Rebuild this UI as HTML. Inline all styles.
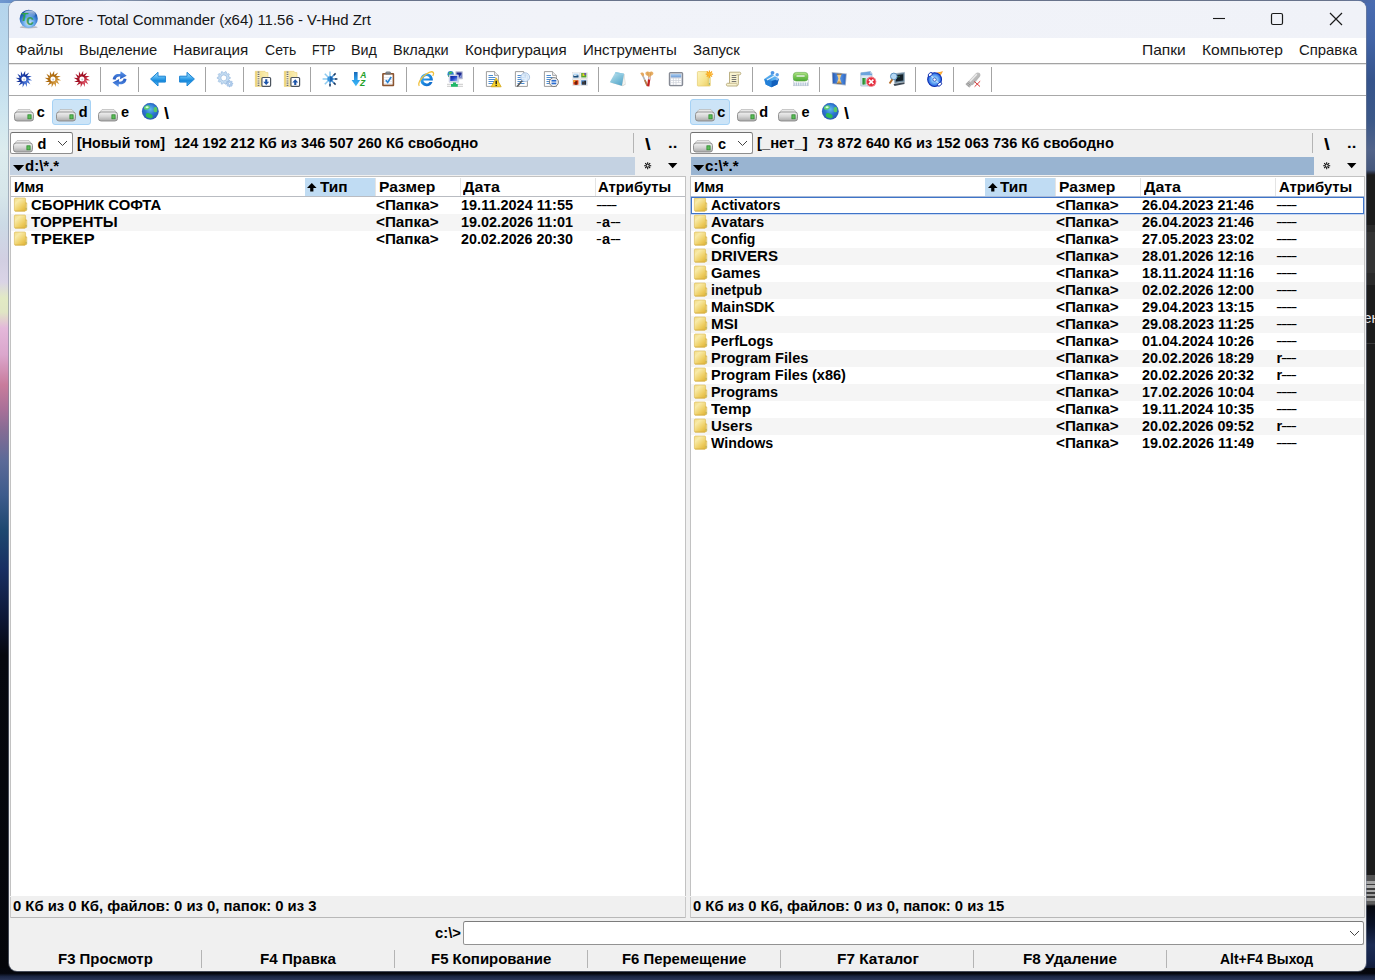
<!DOCTYPE html>
<html lang="ru"><head><meta charset="utf-8"><title>DTore - Total Commander</title>
<style>
html,body{margin:0;padding:0;background:#0c1428;overflow:hidden}
#root{position:relative;width:1375px;height:980px;overflow:hidden;font-family:'Liberation Sans', sans-serif}
#root>div,#root>svg,#root>span{position:absolute}
#root>svg{overflow:visible}
.t{white-space:pre;transform-origin:0 0;color:#000}
.b{font-weight:700}.r{font-weight:400}
</style></head><body><div id="root">
<svg width="0" height="0" style="position:absolute"><defs>
<linearGradient id="drv" x1="0" y1="0" x2="0" y2="1"><stop offset="0" stop-color="#f2f2f2"/><stop offset=".5" stop-color="#d4d4d4"/><stop offset="1" stop-color="#a8a8a8"/></linearGradient>
<radialGradient id="glb" cx=".5" cy=".38" r=".62"><stop offset="0" stop-color="#60bcec"/><stop offset=".55" stop-color="#2c74d0"/><stop offset="1" stop-color="#2a58b4"/></radialGradient>
<linearGradient id="fld" x1="0" y1="0" x2=".8" y2="1"><stop offset="0" stop-color="#f3dc84"/><stop offset=".3" stop-color="#f8eaa8"/><stop offset=".7" stop-color="#efd066"/><stop offset="1" stop-color="#e4b93e"/></linearGradient>
</defs></svg>
<div style="left:0px;top:0px;width:12px;height:980px;background:linear-gradient(180deg,#b4d4ec 0,#bcdaee 60px,#cde5f0 110px,#dcecee 150px,#d6e6ea 195px,#ccdae6 225px,#d2cfe2 260px,#dad4e6 282px,#e2eac4 298px,#e0e6c4 312px,#e4b8da 328px,#dba6cc 355px,#c87c9c 385px,#a87098 410px,#866c94 430px,#5c6a98 460px,#3e5c8c 495px,#1e4870 530px,#182e62 570px,#0d1634 620px,#06080f 655px,#04050a 980px)"></div>
<div style="left:1360px;top:0px;width:15px;height:980px;background:linear-gradient(180deg,#4a6cb2 0,#4264a6 40px,#36548c 80px,#3c5888 120px,#52648a 150px,#46587c 170px,#2a3040 173px,#1c1c1c 175px,#1c1c1c 225px,#2a2a2a 225px,#2a2a2a 232px,#333 232px,#333 273px,#2a2a2a 273px,#2a2a2a 285px,#1c1c1c 285px,#1c1c1c 343px,#3a3a3a 343px,#3a3a3a 344px,#1c1c1c 344px,#1c1c1c 875px,#525252 875px,#525252 881px,#a4a4a4 881px,#a4a4a4 884px,#3c3c3c 884px,#3c3c3c 885px,#b0b0b0 885px,#b0b0b0 888px,#3c3c3c 888px,#3c3c3c 889.500px,#a8a8a8 889.500px,#a8a8a8 892px,#3c3c3c 892px,#3c3c3c 893.500px,#a0a0a0 893.500px,#a0a0a0 896px,#3c3c3c 896px,#3c3c3c 897.500px,#9c9c9c 897.500px,#9c9c9c 901px,#5c5c5c 901px,#5c5c5c 904px,#05070e 906px,#0a1228 925px,#1c2c54 945px,#16244a 960px,#0a1020 980px)"></div>
<span class="t r" style="left:1363.500px;top:309.600px;font-size:14.500px;line-height:17px;color:#e4e4e4">ен</span>
<div style="left:0px;top:0px;width:1375px;height:3px;background:linear-gradient(90deg,#7098d0 0,#4a74b4 4%,#9ab4d8 8%,#56627e 13%,#56627e 97%,#4a6cb2 100%)"></div>
<div style="left:0px;top:968px;width:1375px;height:12px;background:linear-gradient(180deg,#04060c 0,#05070e 45%,#1a2542 70%,#2a3658 100%)"></div>
<div style="left:9px;top:0.8px;width:1357px;height:969.8000000000001px;background:#f0f0f0;border-radius:8px;box-shadow:0 0 0 1px rgba(120,130,150,.55)"></div>
<div style="left:9px;top:0.8px;width:1357px;height:37px;background:linear-gradient(90deg,#eef1f9,#f1f3f9 40%,#f0f2f8);border-radius:8px 8px 0 0"></div>
<div style="left:9px;top:38px;width:1357px;height:91.5px;background:#fff"></div>
<div style="left:9px;top:63px;width:1357px;height:1.3px;background:#a3a3a3"></div>
<div style="left:9px;top:64.3px;width:1357px;height:1px;background:#e6e6e6"></div>
<div style="left:9px;top:95px;width:1357px;height:1.2px;background:#a8a8a8"></div>
<div style="left:9px;top:129px;width:1357px;height:1.2px;background:#cfcfcf"></div>
<svg style="left:18.5px;top:8.6px" width="19.5" height="19.5" viewBox="0 0 19.5 19.5"><defs><radialGradient id="tcg" cx=".5" cy=".72" r=".62"><stop offset="0" stop-color="#dcecfc"/><stop offset=".4" stop-color="#7cb8f0"/><stop offset=".8" stop-color="#2c70c8"/><stop offset="1" stop-color="#1a54a8"/></radialGradient>
<linearGradient id="tch" x1="0" y1="0" x2="0" y2="1"><stop offset="0" stop-color="#fff" stop-opacity=".7"/><stop offset="1" stop-color="#fff" stop-opacity="0"/></linearGradient></defs>
<ellipse cx="9.700" cy="18.200" rx="9" ry="1.200" fill="#8c8c98" opacity=".55"/><circle cx="9.700" cy="9.800" r="9.100" fill="url(#tcg)"/><ellipse cx="10.500" cy="5" rx="6" ry="3.500" fill="url(#tch)"/>
<text x="1.800" y="12.200" font-family="Liberation Sans,sans-serif" font-size="11.500" font-weight="700" font-style="italic" fill="#2ca44c">T</text>
<text x="7.300" y="15.800" font-family="Liberation Sans,sans-serif" font-size="14" font-weight="700" fill="#3a9c5c">c</text></svg>
<svg style="left:1212px;top:12px" width="14" height="14" viewBox="0 0 14 14"><path d="M1 6.500h12" stroke="#1a1a1a" stroke-width="1.100"/></svg>
<svg style="left:1270px;top:12px" width="14" height="14" viewBox="0 0 14 14"><rect x="1.500" y="1.500" width="11" height="11" rx="1.500" fill="none" stroke="#1a1a1a" stroke-width="1.200"/></svg>
<svg style="left:1329px;top:12px" width="14" height="14" viewBox="0 0 14 14"><path d="M1 1l12 12M13 1L1 13" stroke="#1a1a1a" stroke-width="1.200"/></svg>
<svg style="left:16.0px;top:71px" width="16" height="16" viewBox="0 0 16 16"><defs><linearGradient id="sb" x1="0" y1="0" x2="1" y2="1"><stop offset="0" stop-color="#3460c8"/><stop offset=".4" stop-color="#102c94"/><stop offset=".7" stop-color="#3460c8"/><stop offset="1" stop-color="#7cacf8"/></linearGradient></defs><polygon points="6.84,3.93 9.24,-0.19 9.07,3.96 13.21,1.59 10.98,5.10 15.75,5.11 12.07,7.04 16.19,9.44 12.04,9.27 14.41,13.41 10.90,11.18 10.89,15.95 8.96,12.27 6.56,16.39 6.73,12.24 2.59,14.61 4.82,11.10 0.05,11.09 3.73,9.16 -0.39,6.76 3.76,6.93 1.39,2.79 4.90,5.02 4.91,0.25" fill="url(#sb)"/><circle cx="7.9" cy="8.1" r="4.500" fill="url(#sb)"/><circle cx="7.9" cy="8.1" r="2.500" fill="#fff"/><circle cx="8.200" cy="8.400" r="1" fill="#c4c8d0"/></svg>
<svg style="left:45.0px;top:71px" width="16" height="16" viewBox="0 0 16 16"><defs><linearGradient id="so" x1="0" y1="0" x2="1" y2="1"><stop offset="0" stop-color="#c88a2c"/><stop offset=".4" stop-color="#a86408"/><stop offset=".7" stop-color="#c88a2c"/><stop offset="1" stop-color="#f4c470"/></linearGradient></defs><polygon points="6.84,3.93 9.24,-0.19 9.07,3.96 13.21,1.59 10.98,5.10 15.75,5.11 12.07,7.04 16.19,9.44 12.04,9.27 14.41,13.41 10.90,11.18 10.89,15.95 8.96,12.27 6.56,16.39 6.73,12.24 2.59,14.61 4.82,11.10 0.05,11.09 3.73,9.16 -0.39,6.76 3.76,6.93 1.39,2.79 4.90,5.02 4.91,0.25" fill="url(#so)"/><circle cx="7.9" cy="8.1" r="4.500" fill="url(#so)"/><circle cx="7.9" cy="8.1" r="2.500" fill="#fff"/><circle cx="8.200" cy="8.400" r="1" fill="#c4c8d0"/></svg>
<svg style="left:74.0px;top:71px" width="16" height="16" viewBox="0 0 16 16"><defs><linearGradient id="sr" x1="0" y1="0" x2="1" y2="1"><stop offset="0" stop-color="#c83044"/><stop offset=".4" stop-color="#98081c"/><stop offset=".7" stop-color="#c83044"/><stop offset="1" stop-color="#f890a0"/></linearGradient></defs><polygon points="6.84,3.93 9.24,-0.19 9.07,3.96 13.21,1.59 10.98,5.10 15.75,5.11 12.07,7.04 16.19,9.44 12.04,9.27 14.41,13.41 10.90,11.18 10.89,15.95 8.96,12.27 6.56,16.39 6.73,12.24 2.59,14.61 4.82,11.10 0.05,11.09 3.73,9.16 -0.39,6.76 3.76,6.93 1.39,2.79 4.90,5.02 4.91,0.25" fill="url(#sr)"/><circle cx="7.9" cy="8.1" r="4.500" fill="url(#sr)"/><circle cx="7.9" cy="8.1" r="2.500" fill="#fff"/><circle cx="8.200" cy="8.400" r="1" fill="#c4c8d0"/></svg>
<div style="left:99.8px;top:67px;width:1.2px;height:25px;background:#a4a4a4"></div>
<svg style="left:112.0px;top:71px" width="16" height="16" viewBox="0 0 16 16"><defs><linearGradient id="rf" x1="0" y1="0" x2="0" y2="1"><stop offset="0" stop-color="#5c98ec"/><stop offset="1" stop-color="#2458c0"/></linearGradient></defs>
<path d="M.7 8.300C1 4.300 4.400 2.200 8.300 3.100L8.700.2l6 4.500L8 8.200l.3-2.600C6 5.200 4.300 6.100 3.500 8.700z" fill="url(#rf)"/>
<path d="M.7 8.300C1 4.300 4.400 2.200 8.300 3.100L8.700.2l6 4.500L8 8.200l.3-2.600C6 5.200 4.300 6.100 3.500 8.700z" fill="url(#rf)" transform="rotate(180 7.600 8.100)"/></svg>
<div style="left:137.8px;top:67px;width:1.2px;height:25px;background:#a4a4a4"></div>
<svg style="left:150.0px;top:71px" width="16" height="16" viewBox="0 0 16 16"><defs><linearGradient id="ga" x1="0" y1="0" x2="0" y2="1"><stop offset="0" stop-color="#b0e4fc"/><stop offset=".38" stop-color="#4cb0f0"/><stop offset=".62" stop-color="#1488dc"/><stop offset="1" stop-color="#64c0f4"/></linearGradient></defs><path d="M.6 8L8 1.300v3.900h7.400v5.900H8v3.900z" fill="url(#ga)" stroke="#1c84d4" stroke-width="1" stroke-linejoin="round"/></svg>
<svg style="left:179.0px;top:71px" width="16" height="16" viewBox="0 0 16 16"><path d="M15.400 8L8 1.300v3.900H.6v5.900H8v3.900z" fill="url(#ga)" stroke="#1c84d4" stroke-width="1" stroke-linejoin="round"/></svg>
<div style="left:204.8px;top:67px;width:1.2px;height:25px;background:#a4a4a4"></div>
<svg style="left:217.0px;top:71px" width="16" height="16" viewBox="0 0 16 16"><polygon points="13.28,6.39 13.28,7.41 11.66,8.07 11.42,8.81 12.34,10.30 11.74,11.12 10.05,10.70 9.41,11.16 9.29,12.91 8.32,13.22 7.19,11.88 6.41,11.88 5.28,13.22 4.31,12.91 4.19,11.16 3.55,10.70 1.86,11.12 1.26,10.30 2.18,8.81 1.94,8.07 0.32,7.41 0.32,6.39 1.94,5.73 2.18,4.99 1.26,3.50 1.86,2.68 3.55,3.10 4.19,2.64 4.31,0.89 5.28,0.58 6.41,1.92 7.19,1.92 8.32,0.58 9.29,0.89 9.41,2.64 10.05,3.10 11.74,2.68 12.34,3.50 11.42,4.99 11.66,5.73" fill="#c4dcf2" stroke="#9cbce0" stroke-width="0.8" stroke-linejoin="round"/><circle cx="6.8" cy="6.9" r="3" fill="#fff" stroke="#9cbce0" stroke-width="0.8"/><polygon points="15.88,12.38 15.88,13.02 14.90,13.40 14.72,13.83 15.15,14.79 14.69,15.25 13.73,14.82 13.30,15.00 12.92,15.98 12.28,15.98 11.90,15.00 11.47,14.82 10.51,15.25 10.05,14.79 10.48,13.83 10.30,13.40 9.32,13.02 9.32,12.38 10.30,12.00 10.48,11.57 10.05,10.61 10.51,10.15 11.47,10.58 11.90,10.40 12.28,9.42 12.92,9.42 13.30,10.40 13.73,10.58 14.69,10.15 15.15,10.61 14.72,11.57 14.90,12.00" fill="#b4d0ee" stroke="#8cb0dc" stroke-width="0.6" stroke-linejoin="round"/><circle cx="12.6" cy="12.7" r="1.1" fill="#fff" stroke="#8cb0dc" stroke-width="0.6"/></svg>
<div style="left:242.8px;top:67px;width:1.2px;height:25px;background:#a4a4a4"></div>
<svg style="left:255.0px;top:71px" width="16" height="16" viewBox="0 0 16 16"><defs><linearGradient id="zf" x1="0" y1="0" x2="1" y2="0"><stop offset="0" stop-color="#ecd070"/><stop offset=".4" stop-color="#f6e498"/><stop offset="1" stop-color="#fbf0b8"/></linearGradient></defs>
<path d="M.3 .3h9.700l.8 1.300h2.200V15.500H.3z" fill="url(#zf)" stroke="#e4c868" stroke-width=".5"/><rect x="2.300" y=".6" width="2.400" height="14.600" fill="#f8f0d0"/><path d="M3.500 .6v14.600" stroke="#707070" stroke-width="1.800" stroke-dasharray="1.100 1.100"/>
<rect x="6.900" y="6.500" width="8.700" height="8.800" rx="1" fill="#fff" stroke="#4c545e" stroke-width="1.200"/><path d="M10.200 8.200h2.100v2.600h1.900l-2.950 3.200-2.950-3.200h1.900z" fill="#1c54a8"/></svg>
<svg style="left:284.0px;top:71px" width="16" height="16" viewBox="0 0 16 16"><defs><linearGradient id="zf2" x1="0" y1="0" x2="1" y2="0"><stop offset="0" stop-color="#ecd070"/><stop offset=".4" stop-color="#f6e498"/><stop offset="1" stop-color="#fbf0b8"/></linearGradient></defs>
<path d="M.3 .3h9.700l.8 1.300h2.200V15.500H.3z" fill="url(#zf2)" stroke="#e4c868" stroke-width=".5"/><rect x="2.300" y=".6" width="2.400" height="14.600" fill="#f8f0d0"/><path d="M3.500 .6v14.600" stroke="#707070" stroke-width="1.800" stroke-dasharray="1.100 1.100"/>
<rect x="6.900" y="6.500" width="8.700" height="8.800" rx="1" fill="#fff" stroke="#4c545e" stroke-width="1.200"/><path d="M10.200 14h2.100v-2.600h1.900l-2.950-3.200-2.950 3.200h1.900z" fill="#1c54a8"/></svg>
<div style="left:309.8px;top:67px;width:1.2px;height:25px;background:#a4a4a4"></div>
<svg style="left:322.0px;top:71px" width="16" height="16" viewBox="0 0 16 16"><g stroke-width="1.500" stroke-linecap="butt"><path d="M8 .6V8M.6 8H8M2.800 2.800L8 8M2.800 13.200L8 8" stroke="#8ccaf0"/><path d="M8 8v5.600M8 8h5.600M8 8l4.200 4.200M8 8l4.200-4.200" stroke="#4a90d0"/></g>
<path d="M8 13v2.400M13 8h2.400M11.800 11.800l1.800 1.800M11.800 4.200l1.800-1.800" stroke="#16365e" stroke-width="1.500"/><circle cx="8" cy="8" r="2.700" fill="#3a94dc"/><path d="M8 5.300a2.700 2.700 0 0 1 0 5.400z" fill="#1c64b0"/></svg>
<svg style="left:351.0px;top:71px" width="16" height="16" viewBox="0 0 16 16"><defs><linearGradient id="sd" x1="0" y1="0" x2="0" y2="1"><stop offset="0" stop-color="#1668b8"/><stop offset=".5" stop-color="#2a9ce8"/><stop offset="1" stop-color="#40b8f4"/></linearGradient></defs>
<path d="M3 1h3.600v8h2.600L4.900 15.300.6 9h2.400z" fill="url(#sd)"/><text x="9.300" y="7.300" font-family="Liberation Sans,sans-serif" font-size="8.500" font-weight="700" font-style="italic" fill="#1fa028">A</text><text x="9" y="15" font-family="Liberation Sans,sans-serif" font-size="8.500" font-weight="700" font-style="italic" fill="#1fa028">Z</text></svg>
<svg style="left:380.0px;top:71px" width="16" height="16" viewBox="0 0 16 16"><rect x="2.100" y="2" width="12.100" height="13.200" rx="1" fill="#8a5430"/><rect x="3.700" y="3.600" width="8.900" height="10" fill="#fff"/><path d="M4 6.500h8.300M4 8.500h8.300M4 10.500h8.300M4 12.500h8.300" stroke="#dcdce4" stroke-width=".6"/><rect x="5.500" y=".8" width="5.300" height="2.700" rx=".7" fill="#707478"/><rect x="6.500" y=".5" width="3.300" height="1" fill="#9a9ea4"/><path d="M5.800 9.200l1.900 2.200 3.500-5.400" stroke="#2a84d4" stroke-width="1.700" fill="none"/></svg>
<div style="left:405.8px;top:67px;width:1.2px;height:25px;background:#a4a4a4"></div>
<svg style="left:418.0px;top:71px" width="16" height="16" viewBox="0 0 16 16"><defs><linearGradient id="ieg" x1="0" y1="0" x2="1" y2="1"><stop offset="0" stop-color="#58bcf4"/><stop offset=".5" stop-color="#1a88e0"/><stop offset="1" stop-color="#0c5cc0"/></linearGradient></defs>
<path d="M14.800 9.600H5.400c.2 1.700 1.500 2.800 3.200 2.800 1.200 0 2.200-.5 2.800-1.500h3.100c-.9 2.600-3.200 4.300-5.900 4.300-3.600 0-6.300-2.700-6.300-6.400 0-3.600 2.700-6.300 6.300-6.300 3.700 0 6.300 2.800 6.300 6.500zM5.500 7.500h6.300c-.3-1.600-1.500-2.600-3.100-2.600-1.700 0-2.900 1-3.200 2.600z" fill="url(#ieg)"/>
<path d="M1.300 14.800C-.5 12.500 3 6.500 8 3.200 11.200 1 14.300.3 15.300 1.500c.6.700.3 2-.5 3.500" fill="none" stroke="#f0c03c" stroke-width="1.300"/></svg>
<svg style="left:447.0px;top:71px" width="16" height="16" viewBox="0 0 16 16"><defs><linearGradient id="nw" x1="0" y1="0" x2="1" y2="1"><stop offset="0" stop-color="#0c1c9c"/><stop offset=".5" stop-color="#2448c8"/><stop offset="1" stop-color="#9cb8f4"/></linearGradient></defs>
<rect x="8.400" y=".3" width="7.400" height="7.900" rx=".6" fill="#b4b8d0"/><rect x="9.600" y="1.500" width="5" height="5" fill="#1c2890"/><path d="M12 6.500h2.600V3z" fill="#8ca0e0"/>
<circle cx="3.600" cy="3.200" r="3.100" fill="#2a84c8"/><path d="M1.500 2c1-1.200 2.800-1.500 4-.8-.8.800-1.500 1-2.200 1.800-.5.600-1.200.200-1.800-1z" fill="#48c050"/><path d="M1 4.500c.8.200 1.500 1 1.500 1.800" stroke="#48c050" stroke-width="1"/>
<rect x="2" y="3.800" width="9.700" height="7.600" rx=".6" fill="#d4d8ec" stroke="#b8bcd4" stroke-width=".4"/><rect x="3.300" y="5" width="7" height="5" fill="url(#nw)"/>
<path d="M0 13.300h16M0 15.300h16" stroke="#c4c4c4" stroke-width=".9"/><path d="M6 11.400h3v1.600h1.800v2.800H4V13h2z" fill="#20b868"/></svg>
<div style="left:472.8px;top:67px;width:1.2px;height:25px;background:#a4a4a4"></div>
<svg style="left:485.0px;top:71px" width="16" height="16" viewBox="0 0 16 16"><path d="M1.400 .6h8.200l3.800 3.800v11H1.400z" fill="#fff" stroke="#929292" stroke-width=".9"/><path d="M9.600 .6v3.800h3.800" fill="#f0f0f0" stroke="#929292" stroke-width=".8"/><g stroke="#4c8cd0" stroke-width="1"><path d="M3.500 4.500h4.500M3.500 6.500h7M3.500 8.500h7M3.500 10.500h7M3.500 12.500h7"/></g><path d="M11.200 6.800l5 9H6.200z" fill="#f8d42c" stroke="#d0a010" stroke-width=".7" stroke-linejoin="round"/><path d="M11.200 9.700v3.200M11.200 13.700v1.200" stroke="#1a1a1a" stroke-width="1.400"/></svg>
<svg style="left:514.0px;top:71px" width="16" height="16" viewBox="0 0 16 16"><path d="M1.400 .6h8.200l3.800 3.800v11H1.400z" fill="#fff" stroke="#929292" stroke-width=".9"/><path d="M9.600 .6v3.800h3.800" fill="#f0f0f0" stroke="#929292" stroke-width=".8"/><g stroke="#4c8cd0" stroke-width="1"><path d="M3.500 4.500h4.500M3.500 6.500h7M3.500 8.500h7M3.500 10.500h7M3.500 12.500h7"/></g><path d="M8.300 9.500L3.200 15.600" stroke="#5a5a5a" stroke-width="1.500"/><circle cx="11.200" cy="6.200" r="4.400" fill="#dcecfc" fill-opacity=".88" stroke="#a4bcdc" stroke-width=".9"/><path d="M11.200 3v3.800" stroke="#b8d0ec" stroke-width=".8"/></svg>
<svg style="left:543.0px;top:71px" width="16" height="16" viewBox="0 0 16 16"><path d="M1.400 .6h8.200l3.800 3.800v11H1.400z" fill="#fff" stroke="#929292" stroke-width=".9"/><path d="M9.600 .6v3.800h3.800" fill="#f0f0f0" stroke="#929292" stroke-width=".8"/><g stroke="#4c8cd0" stroke-width="1"><path d="M3.500 4.500h4.500M3.500 6.500h7M3.500 8.500h7M3.500 10.500h7M3.500 12.500h7"/></g><circle cx="10.900" cy="11.100" r="4.500" fill="#f6f6f6" stroke="#7c7c7c" stroke-width="1"/><rect x="8.500" y="8.900" width="4.800" height="1.700" fill="#2a6cd0"/><rect x="8.500" y="11.600" width="4.800" height="1.700" fill="#2a6cd0"/></svg>
<svg style="left:572.0px;top:71px" width="16" height="16" viewBox="0 0 16 16"><rect x="1.0" y="1.8" width="6.600" height="5.900" fill="#d8d8dc"/><rect x="0.6" y="1.3" width="6.600" height="5.900" fill="#fcfcfc" stroke="#d4d4d8" stroke-width=".4"/><rect x="1.300" y="2.600" width="5.200" height="3.900" fill="#a8d0f0"/><rect x="1.300" y="4.400" width="5.200" height="2.100" fill="#1c4c78"/><rect x="2" y="3.800" width="2.500" height="1" fill="#f4f4f4"/><rect x="8.9" y="1.8" width="6.600" height="5.900" fill="#d8d8dc"/><rect x="8.5" y="1.3" width="6.600" height="5.900" fill="#fcfcfc" stroke="#d4d4d8" stroke-width=".4"/><rect x="9.200" y="2" width="5.200" height="4.500" fill="#58a430"/><rect x="10.500" y="2.500" width="2" height="2.500" fill="#e8d028"/><rect x="12.500" y="2" width="1.500" height="2" fill="#7048c8"/><rect x="1.0" y="9.0" width="6.600" height="5.900" fill="#d8d8dc"/><rect x="0.6" y="8.5" width="6.600" height="5.900" fill="#fcfcfc" stroke="#d4d4d8" stroke-width=".4"/><rect x="1.300" y="9.200" width="5.200" height="4.500" fill="#d83c14"/><rect x="2.800" y="10" width="2.400" height="3.700" fill="#701c08"/><rect x="1.300" y="9.200" width="2" height="1.800" fill="#f0a020"/><rect x="8.9" y="9.0" width="6.600" height="5.900" fill="#d8d8dc"/><rect x="8.5" y="8.5" width="6.600" height="5.900" fill="#fcfcfc" stroke="#d4d4d8" stroke-width=".4"/><rect x="9.200" y="9.200" width="5.200" height="4.500" fill="#4c84c8"/><rect x="10.200" y="10.500" width="1.600" height="3.200" fill="#382818"/><rect x="12.300" y="9.800" width="1.600" height="3.900" fill="#241c14"/></svg>
<div style="left:597.8px;top:67px;width:1.2px;height:25px;background:#a4a4a4"></div>
<svg style="left:610.0px;top:71px" width="16" height="16" viewBox="0 0 16 16"><defs><linearGradient id="gn" x1="0" y1="0" x2=".7" y2="1"><stop offset="0" stop-color="#cfe8f2"/><stop offset=".5" stop-color="#8cc8de"/><stop offset="1" stop-color="#58a8cc"/></linearGradient></defs>
<path d="M6 1.200l8.600 1.700 1 10.600-3 1.800L1 11.800z" fill="#d4d4d0"/><path d="M12.400 14.600l2.600-1.500-.8-9.800z" fill="#f4f4f0"/><path d="M5.600 1l8.400 1.800-2.200 11.900L-.2 11.200z" fill="url(#gn)"/><path d="M5.600 1l8.400 1.800-.3 1.400L5 2.400z" fill="#90cce4"/></svg>
<svg style="left:639.0px;top:71px" width="16" height="16" viewBox="0 0 16 16"><path d="M3.800 4.500l4.400 10" stroke="#b4b4b8" stroke-width="1.700"/><path d="M5.800 9l2.600 5.800" stroke="#b87840" stroke-width="1.700"/><path d="M1.300 2.200c.8-1.200 3-1 3.600.6l.2 1.800-1.800.8z" fill="#e4a860"/>
<path d="M10.600 5L9.200 15.400" stroke="#c42020" stroke-width="2.300"/><path d="M10.700 5l-.5 3.500" stroke="#d4d4d8" stroke-width="2.300"/><path d="M6.400 1.800c1-1.600 3-1.800 4.200-.8 1.200-1 3.400-.6 3.800 1 .3 1.400-1.200 2.600-2.400 2.800l-.4 1H9.200l-.4-1C7.400 4.600 6 3.400 6.400 1.800z" fill="#e8b068"/><path d="M8.600 1.500c.5 1 .6 2 .4 3M12 1.500c-.5 1-.6 2-.4 3" stroke="#c88838" stroke-width=".6" fill="none"/></svg>
<svg style="left:668.0px;top:71px" width="16" height="16" viewBox="0 0 16 16"><defs><linearGradient id="cd" x1="0" y1="0" x2="0" y2="1"><stop offset="0" stop-color="#b0d0f0"/><stop offset="1" stop-color="#6c9cd8"/></linearGradient></defs>
<rect x="1.400" y="1.600" width="13.200" height="13" rx="1" fill="#d0d4dc" stroke="#868a94" stroke-width="1.200"/><rect x="2.800" y="3" width="10.400" height="3.300" fill="url(#cd)"/><g fill="#fff"><rect x="3" y="7.500" width="1.900" height="1.600"/><rect x="5.700" y="7.500" width="1.900" height="1.600"/><rect x="8.400" y="7.500" width="1.900" height="1.600"/><rect x="11.100" y="7.500" width="1.900" height="1.600"/><rect x="3" y="9.800" width="1.900" height="1.600"/><rect x="5.700" y="9.800" width="1.900" height="1.600"/><rect x="8.400" y="9.800" width="1.900" height="1.600"/><rect x="11.100" y="9.800" width="1.900" height="1.600"/><rect x="3" y="12.100" width="1.900" height="1.600"/><rect x="5.700" y="12.100" width="1.900" height="1.600"/><rect x="8.400" y="12.100" width="4.600" height="1.600"/></g></svg>
<svg style="left:697.0px;top:71px" width="16" height="16" viewBox="0 0 16 16"><defs><linearGradient id="gnf" x1="0" y1="0" x2="1" y2="1"><stop offset="0" stop-color="#fcf4c0"/><stop offset=".6" stop-color="#f6e490"/><stop offset="1" stop-color="#ecd068"/></linearGradient></defs>
<path d="M11 5h1.600c.4 0 .7.300.7.700V14.400c0 .4-.3.700-.7.700H11z" fill="#f0d870" stroke="#dcc058" stroke-width=".5"/><path d="M12.200 7.500v6" stroke="#d4e4c8" stroke-width="1"/><rect x="11.800" y="12" width="1" height="1.800" fill="#8cb078"/>
<rect x=".4" y=".6" width="10.800" height="14.500" rx=".8" fill="url(#gnf)" stroke="#e0c460" stroke-width=".6"/><g stroke="#f8a418" stroke-width="1.200"><path d="M12.400 -.6v7.400M8.700 3.100h7.400M9.800 .5l5.200 5.200M15 .5L9.800 5.700"/></g><circle cx="12.400" cy="3.100" r="1.800" fill="#fbb830"/></svg>
<svg style="left:726.0px;top:71px" width="16" height="16" viewBox="0 0 16 16"><path d="M3.500 1.200h10.200c1.500 0 1.500 2.600 0 2.600h-1.300v8.700c0 1.700-.8 2.500-2 2.500H1.500c-1.500 0-1.500-2.700 0-2.700h2z" fill="#f8f2d0" stroke="#b4a878" stroke-width=".9"/><path d="M12.400 3.800h-2" stroke="#b4a878" stroke-width=".7"/><path d="M3.500 12.300h7c.9 0 .9 2.700 0 2.700" fill="none" stroke="#b4a878" stroke-width=".7"/><g stroke="#686868" stroke-width=".9"><path d="M5.700 4.500h4.600M5.700 6.500h4.600M5.700 8.500h4.600M5.700 10.500h4.600"/></g></svg>
<div style="left:751.8px;top:67px;width:1.2px;height:25px;background:#a4a4a4"></div>
<svg style="left:764.0px;top:71px" width="16" height="16" viewBox="0 0 16 16"><defs><linearGradient id="sh" x1="0" y1="0" x2="1" y2="1"><stop offset="0" stop-color="#6cc0f8"/><stop offset="1" stop-color="#1468c8"/></linearGradient></defs>
<path d="M7.500 3L14.800 8l-1.500 5.500-5.800 2.700-5.800-2.700L.2 8z" fill="url(#sh)"/><path d="M7.500 3L14.800 8 7.500 10z" fill="#58b0f0"/><path d="M7.500 10v6.200l-5.800-2.700L.2 8z" fill="#2480d8"/><path d="M7.500 10v6.200l5.800-2.700L14.800 8z" fill="#1260bc"/>
<path d="M3 9l9-5" stroke="#e4f0fc" stroke-width="1.100"/><circle cx="8.500" cy="1.800" r="1.900" fill="#4c94e4"/><circle cx="13.200" cy="3.800" r="1.700" fill="#5ca0e8"/><circle cx="13" cy="8" r="1.400" fill="#84b8f0"/></svg>
<svg style="left:793.0px;top:71px" width="16" height="16" viewBox="0 0 16 16"><defs><linearGradient id="sg" x1="0" y1="0" x2="0" y2="1"><stop offset="0" stop-color="#b4e48c"/><stop offset=".5" stop-color="#78c850"/><stop offset="1" stop-color="#4ca838"/></linearGradient></defs>
<rect x=".3" y="8.500" width="15" height="6.300" fill="#fafafa" stroke="#b4bcc8" stroke-width=".5"/><path d="M1.800 11.500v3.200M3.600 11.500v3.200M5.400 11.500v3.200M7.200 11.500v3.200M9 11.500v3.200M10.800 11.500v3.200M12.600 11.500v3.200M14.400 11.500v3.200" stroke="#98b0cc" stroke-width=".8"/>
<rect x=".3" y="1.400" width="14.600" height="8.600" rx="3" fill="url(#sg)" stroke="#58a840" stroke-width=".6"/><rect x="3" y="4" width="9.200" height="2" rx="1" fill="#f0f8e8" stroke="#5ca848" stroke-width=".5"/></svg>
<div style="left:818.8px;top:67px;width:1.2px;height:25px;background:#a4a4a4"></div>
<svg style="left:831.0px;top:71px" width="16" height="16" viewBox="0 0 16 16"><defs><linearGradient id="hg" x1="0" y1="0" x2="1" y2="0"><stop offset="0" stop-color="#2458b4"/><stop offset=".5" stop-color="#5c9cec"/><stop offset="1" stop-color="#2c64c0"/></linearGradient></defs>
<path d="M.8 1l15 1.600-1 11.800-13.500-1.400z" fill="#a4b0c4"/><path d="M1.600 1.900l13.300 1.400-.9 10.200-12-1.200z" fill="url(#hg)"/><path d="M6 3.400h4.400L9 7.600l1.400 4.400H6l1.400-4.400z" fill="#f4cc84"/><path d="M5.700 3.200h5M5.700 12.200h5" stroke="#a06c24" stroke-width="1"/><path d="M7.200 10.500h2l.4 1.300H6.800z" fill="#c88c34"/></svg>
<svg style="left:860.0px;top:71px" width="16" height="16" viewBox="0 0 16 16"><path d="M.8 1.800L10.500.6l1.500 2V15H.8z" fill="#dce8f4" stroke="#a4b8d0" stroke-width=".7"/><path d="M.8 1.800L10.500.6l1.500 2v1.600H.8z" fill="#6ca4dc"/><path d="M10.500.6v2h1.500" fill="#fff" stroke="#a4b8d0" stroke-width=".5"/><rect x="2.600" y="7" width="3" height="6.500" fill="#44a848"/><rect x="2.600" y="7" width="1.200" height="6.500" fill="#2c8834"/>
<circle cx="11.200" cy="10.800" r="5" fill="#e42c3c"/><circle cx="11.200" cy="10.800" r="4.700" fill="none" stroke="#f8b0b8" stroke-width=".7"/><path d="M9 8.600l4.400 4.400M13.400 8.600L9 13" stroke="#fff" stroke-width="1.700"/></svg>
<svg style="left:889.0px;top:71px" width="16" height="16" viewBox="0 0 16 16"><path d="M5 2.800l10.500-1.400v9.400l-9.800 1.500z" fill="#688498" stroke="#9cb0c0" stroke-width=".7"/><path d="M6.600 4.200l7.600-1v6.400l-7.200 1z" fill="#142028"/><path d="M8 6l3-.4" stroke="#3c8c5c" stroke-width=".7"/><path d="M4.500 13l11-1.700v1.600l-10 2z" fill="#3c4854"/>
<circle cx="4.800" cy="5.400" r="3.300" fill="#b4d8f4" stroke="#5c90bc" stroke-width="1"/><path d="M3.400 8.200L.6 12.600" stroke="#b46c28" stroke-width="1.900"/></svg>
<div style="left:914.8px;top:67px;width:1.2px;height:25px;background:#a4a4a4"></div>
<svg style="left:927.0px;top:71px" width="16" height="16" viewBox="0 0 16 16"><defs><radialGradient id="cdg" cx=".5" cy=".5" r=".5"><stop offset="0" stop-color="#e0f4ff"/><stop offset=".35" stop-color="#8cccfc"/><stop offset="1" stop-color="#1c5ce0"/></radialGradient></defs>
<path d="M7.500 2.200L16 .2l-3.300 5.600z" fill="#f48c1c"/><path d="M10 2.200l5-1.200-2.200 3.600z" fill="#fcc044"/><circle cx="7.600" cy="8.600" r="6.900" fill="url(#cdg)" stroke="#0c2cb0" stroke-width="1.100"/><path d="M7.600 8.600L3.500 3.800M7.600 8.600l5 4.400" stroke="#d0ecff" stroke-width="1.400" opacity=".7"/><circle cx="7.600" cy="8.600" r="1.700" fill="#f4faff" stroke="#0c2cb0" stroke-width=".7"/>
<ellipse cx="3.300" cy="3.500" rx="2.400" ry="1.500" transform="rotate(-42 3.300 3.500)" fill="#fff" stroke="#0c2cb0" stroke-width=".9"/><ellipse cx="12.600" cy="13.200" rx="2.400" ry="1.500" transform="rotate(-42 12.600 13.200)" fill="#fff" stroke="#0c2cb0" stroke-width=".9"/></svg>
<div style="left:952.8px;top:67px;width:1.2px;height:25px;background:#a4a4a4"></div>
<svg style="left:965.0px;top:71px" width="16" height="16" viewBox="0 0 16 16"><defs><linearGradient id="ug" x1="0" y1="0" x2="1" y2="1"><stop offset="0" stop-color="#d8d8d8"/><stop offset="1" stop-color="#a0a0a0"/></linearGradient></defs>
<path d="M3.200 10.400l7.400-8c1.100-1.200 2.900-1.300 4-.3s1.100 2.800 0 4L7.600 14.200z" fill="url(#ug)"/><path d="M5 10.500l6.800-7.200" stroke="#ececec" stroke-width="1.300"/><path d="M.8 13.200l2.600-2.800 3.400 3.200-2.600 2.600z" fill="#b8b8b8" stroke="#909090" stroke-width=".5"/><path d="M2.300 13.300l1.300-1.300M3.600 14.500l1.300-1.300" stroke="#707070" stroke-width=".7"/>
<path d="M9.300 10.500l5.700 5M15.200 10.200l-5.600 5.500" stroke="#d42424" stroke-width=".9"/></svg>
<div style="left:990.8px;top:67px;width:1.2px;height:25px;background:#a4a4a4"></div>
<div style="left:51.6px;top:99px;width:39.5px;height:25.5px;background:#cce4f7;border:1px solid #a6d2f5;border-radius:3px;box-sizing:border-box"></div>
<svg style="left:14.2px;top:109.3px" width="20" height="12.5" viewBox="0 0 20 12.5"><path d="M4 .6h12l2.600 3H1.400z" fill="#ececec" stroke="#b0b0b0" stroke-width=".7"/><rect x=".5" y="3" width="19" height="9" rx="2.600" fill="url(#drv)" stroke="#8a8a8a" stroke-width=".9"/><rect x="13.900" y="5.800" width="3.200" height="4" fill="#5cbc58" stroke="#2f8c30" stroke-width=".8"/></svg>
<svg style="left:56.2px;top:109.3px" width="20" height="12.5" viewBox="0 0 20 12.5"><path d="M4 .6h12l2.600 3H1.400z" fill="#ececec" stroke="#b0b0b0" stroke-width=".7"/><rect x=".5" y="3" width="19" height="9" rx="2.600" fill="url(#drv)" stroke="#8a8a8a" stroke-width=".9"/><rect x="13.900" y="5.800" width="3.200" height="4" fill="#5cbc58" stroke="#2f8c30" stroke-width=".8"/></svg>
<svg style="left:97.6px;top:109.3px" width="20" height="12.5" viewBox="0 0 20 12.5"><path d="M4 .6h12l2.600 3H1.400z" fill="#ececec" stroke="#b0b0b0" stroke-width=".7"/><rect x=".5" y="3" width="19" height="9" rx="2.600" fill="url(#drv)" stroke="#8a8a8a" stroke-width=".9"/><rect x="13.900" y="5.800" width="3.200" height="4" fill="#5cbc58" stroke="#2f8c30" stroke-width=".8"/></svg>
<svg style="left:141.9px;top:102.8px" width="16.6" height="16.6" viewBox="0 0 16 16"><circle cx="8" cy="8" r="8" fill="url(#glb)"/><ellipse cx="4.700" cy="4.300" rx="3" ry="2" transform="rotate(-20 4.700 4.300)" fill="#5cd070"/><ellipse cx="4.900" cy="4.100" rx="1.500" ry="1" fill="#d8fce0"/><ellipse cx="13" cy="6.300" rx="1.900" ry="2.600" fill="#58c864"/><ellipse cx="7" cy="12.300" rx="3.500" ry="2.200" transform="rotate(22 7 12.300)" fill="#2cbc54"/><circle cx="8" cy="8" r="7.700" fill="none" stroke="#2c5cb0" stroke-width=".6" opacity=".7"/></svg>
<div style="left:690.1px;top:99px;width:39.5px;height:25.5px;background:#cce4f7;border:1px solid #a6d2f5;border-radius:3px;box-sizing:border-box"></div>
<svg style="left:694.7px;top:109.3px" width="20" height="12.5" viewBox="0 0 20 12.5"><path d="M4 .6h12l2.600 3H1.400z" fill="#ececec" stroke="#b0b0b0" stroke-width=".7"/><rect x=".5" y="3" width="19" height="9" rx="2.600" fill="url(#drv)" stroke="#8a8a8a" stroke-width=".9"/><rect x="13.900" y="5.800" width="3.200" height="4" fill="#5cbc58" stroke="#2f8c30" stroke-width=".8"/></svg>
<svg style="left:736.7px;top:109.3px" width="20" height="12.5" viewBox="0 0 20 12.5"><path d="M4 .6h12l2.600 3H1.400z" fill="#ececec" stroke="#b0b0b0" stroke-width=".7"/><rect x=".5" y="3" width="19" height="9" rx="2.600" fill="url(#drv)" stroke="#8a8a8a" stroke-width=".9"/><rect x="13.900" y="5.800" width="3.200" height="4" fill="#5cbc58" stroke="#2f8c30" stroke-width=".8"/></svg>
<svg style="left:778.1px;top:109.3px" width="20" height="12.5" viewBox="0 0 20 12.5"><path d="M4 .6h12l2.600 3H1.400z" fill="#ececec" stroke="#b0b0b0" stroke-width=".7"/><rect x=".5" y="3" width="19" height="9" rx="2.600" fill="url(#drv)" stroke="#8a8a8a" stroke-width=".9"/><rect x="13.900" y="5.800" width="3.200" height="4" fill="#5cbc58" stroke="#2f8c30" stroke-width=".8"/></svg>
<svg style="left:822.4px;top:102.8px" width="16.6" height="16.6" viewBox="0 0 16 16"><circle cx="8" cy="8" r="8" fill="url(#glb)"/><ellipse cx="4.700" cy="4.300" rx="3" ry="2" transform="rotate(-20 4.700 4.300)" fill="#5cd070"/><ellipse cx="4.900" cy="4.100" rx="1.500" ry="1" fill="#d8fce0"/><ellipse cx="13" cy="6.300" rx="1.900" ry="2.600" fill="#58c864"/><ellipse cx="7" cy="12.300" rx="3.500" ry="2.200" transform="rotate(22 7 12.300)" fill="#2cbc54"/><circle cx="8" cy="8" r="7.700" fill="none" stroke="#2c5cb0" stroke-width=".6" opacity=".7"/></svg>
<div style="left:10.4px;top:132.2px;width:62.3px;height:22.3px;background:#fff;border:1px solid #8e8e8e;border-top-color:#707070;border-radius:2.500px;box-sizing:border-box"></div>
<svg style="left:13.2px;top:140.2px" width="20" height="12.5" viewBox="0 0 20 12.5"><path d="M4 .6h12l2.600 3H1.400z" fill="#ececec" stroke="#b0b0b0" stroke-width=".7"/><rect x=".5" y="3" width="19" height="9" rx="2.600" fill="url(#drv)" stroke="#8a8a8a" stroke-width=".9"/><rect x="13.900" y="5.800" width="3.200" height="4" fill="#5cbc58" stroke="#2f8c30" stroke-width=".8"/></svg>
<svg style="left:56.9px;top:139.9px" width="11" height="7" viewBox="0 0 11 7"><path d="M1 1l4.500 4.500L10 1" fill="none" stroke="#444" stroke-width="1"/></svg>
<div style="left:633.2px;top:133px;width:1.2px;height:20px;background:#b4b4b4"></div>
<div style="left:690.4px;top:132.2px;width:62.3px;height:22.3px;background:#fff;border:1px solid #8e8e8e;border-top-color:#707070;border-radius:2.500px;box-sizing:border-box"></div>
<svg style="left:693.2px;top:140.2px" width="20" height="12.5" viewBox="0 0 20 12.5"><path d="M4 .6h12l2.600 3H1.400z" fill="#ececec" stroke="#b0b0b0" stroke-width=".7"/><rect x=".5" y="3" width="19" height="9" rx="2.600" fill="url(#drv)" stroke="#8a8a8a" stroke-width=".9"/><rect x="13.900" y="5.800" width="3.200" height="4" fill="#5cbc58" stroke="#2f8c30" stroke-width=".8"/></svg>
<svg style="left:736.9px;top:139.9px" width="11" height="7" viewBox="0 0 11 7"><path d="M1 1l4.500 4.500L10 1" fill="none" stroke="#444" stroke-width="1"/></svg>
<div style="left:1312.2px;top:133px;width:1.2px;height:20px;background:#b4b4b4"></div>
<div style="left:10px;top:157.4px;width:624.8px;height:17.7px;background:#c4d2e2"></div>
<svg style="left:12.9px;top:165.2px" width="11.2" height="6.1" viewBox="0 0 11.2 6.1"><path d="M0 0h11.200L5.600 6.100z" fill="#000"/></svg>
<svg style="left:643.5999999999999px;top:161.8px" width="7.4" height="7.4" viewBox="0 0 8 8"><g stroke="#000" stroke-width="1.100"><path d="M4 .2v7.600M.2 4h7.600M1.300 1.300l5.400 5.400M6.700 1.300L1.300 6.700"/></g><circle cx="4" cy="4" r="1.200" fill="#f0f0f0"/></svg>
<svg style="left:667.6999999999999px;top:163px" width="10" height="6" viewBox="0 0 10 6"><path d="M0 0h9.400L4.700 5.300z" fill="#000"/></svg>
<div style="left:690.5px;top:157.4px;width:623.5px;height:17.7px;background:#99b4d1"></div>
<svg style="left:693.4px;top:165.2px" width="11.2" height="6.1" viewBox="0 0 11.2 6.1"><path d="M0 0h11.200L5.600 6.100z" fill="#000"/></svg>
<svg style="left:1322.8px;top:161.8px" width="7.4" height="7.4" viewBox="0 0 8 8"><g stroke="#000" stroke-width="1.100"><path d="M4 .2v7.600M.2 4h7.600M1.300 1.300l5.400 5.400M6.700 1.300L1.300 6.700"/></g><circle cx="4" cy="4" r="1.200" fill="#f0f0f0"/></svg>
<svg style="left:1346.9px;top:163px" width="10" height="6" viewBox="0 0 10 6"><path d="M0 0h9.400L4.700 5.300z" fill="#000"/></svg>
<div style="left:10px;top:176px;width:675.8px;height:720.1px;background:#fff;border:1px solid #c2c2c2;border-bottom:none;box-sizing:border-box"></div>
<div style="left:11px;top:196px;width:673.8px;height:1px;background:#b9bcc2"></div>
<div style="left:305px;top:177.5px;width:70.80000000000001px;height:18.5px;background:#c0dcf3"></div>
<div style="left:375.3px;top:178px;width:1px;height:17.5px;background:#e4e4e4"></div>
<div style="left:459.5px;top:178px;width:1px;height:17.5px;background:#e4e4e4"></div>
<div style="left:595.0px;top:178px;width:1px;height:17.5px;background:#e4e4e4"></div>
<svg style="left:307.3px;top:183.3px" width="9.6" height="8.4" viewBox="0 0 9.6 8.4"><path d="M4.800 0L0 4.900h3.200v3.500h3.200V4.900h3.200z" fill="#000"/></svg>
<svg style="left:13.5px;top:197px" width="14" height="15" viewBox="0 0 14 15"><path d="M11.200 5.600h.6c.6 0 1 .4 1 1v6.200c0 .5-.4.9-.9.9h-.7z" fill="#ecd064" stroke="#cfa843" stroke-width=".5"/><path d="M11.750 6.800v4.400" stroke="#fffbe0" stroke-width=".7"/><rect x="11.300" y="10.900" width="1.100" height="1.700" fill="#86aa6c"/><path d="M.4 2c0-.6.4-1 1-1h9.200c.6 0 1 .4 1 1v11.200c0 .6-.4 1-1 1H1.400c-.6 0-1-.4-1-1z" fill="url(#fld)" stroke="#d9b750" stroke-width=".6"/><path d="M1 14h10" stroke="#cda53e" stroke-width=".5"/></svg>
<div style="left:11px;top:214px;width:673.8px;height:17px;background:#f5f5f5"></div>
<svg style="left:13.5px;top:214px" width="14" height="15" viewBox="0 0 14 15"><path d="M11.200 5.600h.6c.6 0 1 .4 1 1v6.200c0 .5-.4.9-.9.9h-.7z" fill="#ecd064" stroke="#cfa843" stroke-width=".5"/><path d="M11.750 6.800v4.400" stroke="#fffbe0" stroke-width=".7"/><rect x="11.300" y="10.900" width="1.100" height="1.700" fill="#86aa6c"/><path d="M.4 2c0-.6.4-1 1-1h9.200c.6 0 1 .4 1 1v11.200c0 .6-.4 1-1 1H1.400c-.6 0-1-.4-1-1z" fill="url(#fld)" stroke="#d9b750" stroke-width=".6"/><path d="M1 14h10" stroke="#cda53e" stroke-width=".5"/></svg>
<svg style="left:13.5px;top:231px" width="14" height="15" viewBox="0 0 14 15"><path d="M11.200 5.600h.6c.6 0 1 .4 1 1v6.200c0 .5-.4.9-.9.9h-.7z" fill="#ecd064" stroke="#cfa843" stroke-width=".5"/><path d="M11.750 6.800v4.400" stroke="#fffbe0" stroke-width=".7"/><rect x="11.300" y="10.900" width="1.100" height="1.700" fill="#86aa6c"/><path d="M.4 2c0-.6.4-1 1-1h9.200c.6 0 1 .4 1 1v11.200c0 .6-.4 1-1 1H1.400c-.6 0-1-.4-1-1z" fill="url(#fld)" stroke="#d9b750" stroke-width=".6"/><path d="M1 14h10" stroke="#cda53e" stroke-width=".5"/></svg>
<div style="left:690.3px;top:176px;width:674.7px;height:720.1px;background:#fff;border:1px solid #c2c2c2;border-bottom:none;box-sizing:border-box"></div>
<div style="left:691.3px;top:196px;width:672.7px;height:1px;background:#b9bcc2"></div>
<div style="left:985.4px;top:177.5px;width:70.10000000000002px;height:18.5px;background:#c0dcf3"></div>
<div style="left:1055.0px;top:178px;width:1px;height:17.5px;background:#e4e4e4"></div>
<div style="left:1140.3px;top:178px;width:1px;height:17.5px;background:#e4e4e4"></div>
<div style="left:1275.2px;top:178px;width:1px;height:17.5px;background:#e4e4e4"></div>
<svg style="left:987.6999999999999px;top:183.3px" width="9.6" height="8.4" viewBox="0 0 9.6 8.4"><path d="M4.800 0L0 4.900h3.200v3.500h3.200V4.900h3.200z" fill="#000"/></svg>
<svg style="left:693.8px;top:197px" width="14" height="15" viewBox="0 0 14 15"><path d="M11.200 5.600h.6c.6 0 1 .4 1 1v6.200c0 .5-.4.9-.9.9h-.7z" fill="#ecd064" stroke="#cfa843" stroke-width=".5"/><path d="M11.750 6.800v4.400" stroke="#fffbe0" stroke-width=".7"/><rect x="11.300" y="10.900" width="1.100" height="1.700" fill="#86aa6c"/><path d="M.4 2c0-.6.4-1 1-1h9.200c.6 0 1 .4 1 1v11.200c0 .6-.4 1-1 1H1.400c-.6 0-1-.4-1-1z" fill="url(#fld)" stroke="#d9b750" stroke-width=".6"/><path d="M1 14h10" stroke="#cda53e" stroke-width=".5"/></svg>
<div style="left:691.3px;top:214px;width:672.7px;height:17px;background:#f5f5f5"></div>
<svg style="left:693.8px;top:214px" width="14" height="15" viewBox="0 0 14 15"><path d="M11.200 5.600h.6c.6 0 1 .4 1 1v6.200c0 .5-.4.9-.9.9h-.7z" fill="#ecd064" stroke="#cfa843" stroke-width=".5"/><path d="M11.750 6.800v4.400" stroke="#fffbe0" stroke-width=".7"/><rect x="11.300" y="10.900" width="1.100" height="1.700" fill="#86aa6c"/><path d="M.4 2c0-.6.4-1 1-1h9.200c.6 0 1 .4 1 1v11.200c0 .6-.4 1-1 1H1.400c-.6 0-1-.4-1-1z" fill="url(#fld)" stroke="#d9b750" stroke-width=".6"/><path d="M1 14h10" stroke="#cda53e" stroke-width=".5"/></svg>
<svg style="left:693.8px;top:231px" width="14" height="15" viewBox="0 0 14 15"><path d="M11.200 5.600h.6c.6 0 1 .4 1 1v6.200c0 .5-.4.9-.9.9h-.7z" fill="#ecd064" stroke="#cfa843" stroke-width=".5"/><path d="M11.750 6.800v4.400" stroke="#fffbe0" stroke-width=".7"/><rect x="11.300" y="10.900" width="1.100" height="1.700" fill="#86aa6c"/><path d="M.4 2c0-.6.4-1 1-1h9.200c.6 0 1 .4 1 1v11.200c0 .6-.4 1-1 1H1.400c-.6 0-1-.4-1-1z" fill="url(#fld)" stroke="#d9b750" stroke-width=".6"/><path d="M1 14h10" stroke="#cda53e" stroke-width=".5"/></svg>
<div style="left:691.3px;top:248px;width:672.7px;height:17px;background:#f5f5f5"></div>
<svg style="left:693.8px;top:248px" width="14" height="15" viewBox="0 0 14 15"><path d="M11.200 5.600h.6c.6 0 1 .4 1 1v6.200c0 .5-.4.9-.9.9h-.7z" fill="#ecd064" stroke="#cfa843" stroke-width=".5"/><path d="M11.750 6.800v4.400" stroke="#fffbe0" stroke-width=".7"/><rect x="11.300" y="10.900" width="1.100" height="1.700" fill="#86aa6c"/><path d="M.4 2c0-.6.4-1 1-1h9.200c.6 0 1 .4 1 1v11.200c0 .6-.4 1-1 1H1.400c-.6 0-1-.4-1-1z" fill="url(#fld)" stroke="#d9b750" stroke-width=".6"/><path d="M1 14h10" stroke="#cda53e" stroke-width=".5"/></svg>
<svg style="left:693.8px;top:265px" width="14" height="15" viewBox="0 0 14 15"><path d="M11.200 5.600h.6c.6 0 1 .4 1 1v6.200c0 .5-.4.9-.9.9h-.7z" fill="#ecd064" stroke="#cfa843" stroke-width=".5"/><path d="M11.750 6.800v4.400" stroke="#fffbe0" stroke-width=".7"/><rect x="11.300" y="10.900" width="1.100" height="1.700" fill="#86aa6c"/><path d="M.4 2c0-.6.4-1 1-1h9.200c.6 0 1 .4 1 1v11.200c0 .6-.4 1-1 1H1.400c-.6 0-1-.4-1-1z" fill="url(#fld)" stroke="#d9b750" stroke-width=".6"/><path d="M1 14h10" stroke="#cda53e" stroke-width=".5"/></svg>
<div style="left:691.3px;top:282px;width:672.7px;height:17px;background:#f5f5f5"></div>
<svg style="left:693.8px;top:282px" width="14" height="15" viewBox="0 0 14 15"><path d="M11.200 5.600h.6c.6 0 1 .4 1 1v6.200c0 .5-.4.9-.9.9h-.7z" fill="#ecd064" stroke="#cfa843" stroke-width=".5"/><path d="M11.750 6.800v4.400" stroke="#fffbe0" stroke-width=".7"/><rect x="11.300" y="10.900" width="1.100" height="1.700" fill="#86aa6c"/><path d="M.4 2c0-.6.4-1 1-1h9.200c.6 0 1 .4 1 1v11.200c0 .6-.4 1-1 1H1.400c-.6 0-1-.4-1-1z" fill="url(#fld)" stroke="#d9b750" stroke-width=".6"/><path d="M1 14h10" stroke="#cda53e" stroke-width=".5"/></svg>
<svg style="left:693.8px;top:299px" width="14" height="15" viewBox="0 0 14 15"><path d="M11.200 5.600h.6c.6 0 1 .4 1 1v6.200c0 .5-.4.9-.9.9h-.7z" fill="#ecd064" stroke="#cfa843" stroke-width=".5"/><path d="M11.750 6.800v4.400" stroke="#fffbe0" stroke-width=".7"/><rect x="11.300" y="10.900" width="1.100" height="1.700" fill="#86aa6c"/><path d="M.4 2c0-.6.4-1 1-1h9.200c.6 0 1 .4 1 1v11.200c0 .6-.4 1-1 1H1.400c-.6 0-1-.4-1-1z" fill="url(#fld)" stroke="#d9b750" stroke-width=".6"/><path d="M1 14h10" stroke="#cda53e" stroke-width=".5"/></svg>
<div style="left:691.3px;top:316px;width:672.7px;height:17px;background:#f5f5f5"></div>
<svg style="left:693.8px;top:316px" width="14" height="15" viewBox="0 0 14 15"><path d="M11.200 5.600h.6c.6 0 1 .4 1 1v6.200c0 .5-.4.9-.9.9h-.7z" fill="#ecd064" stroke="#cfa843" stroke-width=".5"/><path d="M11.750 6.800v4.400" stroke="#fffbe0" stroke-width=".7"/><rect x="11.300" y="10.900" width="1.100" height="1.700" fill="#86aa6c"/><path d="M.4 2c0-.6.4-1 1-1h9.200c.6 0 1 .4 1 1v11.200c0 .6-.4 1-1 1H1.400c-.6 0-1-.4-1-1z" fill="url(#fld)" stroke="#d9b750" stroke-width=".6"/><path d="M1 14h10" stroke="#cda53e" stroke-width=".5"/></svg>
<svg style="left:693.8px;top:333px" width="14" height="15" viewBox="0 0 14 15"><path d="M11.200 5.600h.6c.6 0 1 .4 1 1v6.200c0 .5-.4.9-.9.9h-.7z" fill="#ecd064" stroke="#cfa843" stroke-width=".5"/><path d="M11.750 6.800v4.400" stroke="#fffbe0" stroke-width=".7"/><rect x="11.300" y="10.900" width="1.100" height="1.700" fill="#86aa6c"/><path d="M.4 2c0-.6.4-1 1-1h9.200c.6 0 1 .4 1 1v11.200c0 .6-.4 1-1 1H1.400c-.6 0-1-.4-1-1z" fill="url(#fld)" stroke="#d9b750" stroke-width=".6"/><path d="M1 14h10" stroke="#cda53e" stroke-width=".5"/></svg>
<div style="left:691.3px;top:350px;width:672.7px;height:17px;background:#f5f5f5"></div>
<svg style="left:693.8px;top:350px" width="14" height="15" viewBox="0 0 14 15"><path d="M11.200 5.600h.6c.6 0 1 .4 1 1v6.200c0 .5-.4.9-.9.9h-.7z" fill="#ecd064" stroke="#cfa843" stroke-width=".5"/><path d="M11.750 6.800v4.400" stroke="#fffbe0" stroke-width=".7"/><rect x="11.300" y="10.900" width="1.100" height="1.700" fill="#86aa6c"/><path d="M.4 2c0-.6.4-1 1-1h9.200c.6 0 1 .4 1 1v11.200c0 .6-.4 1-1 1H1.400c-.6 0-1-.4-1-1z" fill="url(#fld)" stroke="#d9b750" stroke-width=".6"/><path d="M1 14h10" stroke="#cda53e" stroke-width=".5"/></svg>
<svg style="left:693.8px;top:367px" width="14" height="15" viewBox="0 0 14 15"><path d="M11.200 5.600h.6c.6 0 1 .4 1 1v6.200c0 .5-.4.9-.9.9h-.7z" fill="#ecd064" stroke="#cfa843" stroke-width=".5"/><path d="M11.750 6.800v4.400" stroke="#fffbe0" stroke-width=".7"/><rect x="11.300" y="10.900" width="1.100" height="1.700" fill="#86aa6c"/><path d="M.4 2c0-.6.4-1 1-1h9.200c.6 0 1 .4 1 1v11.200c0 .6-.4 1-1 1H1.400c-.6 0-1-.4-1-1z" fill="url(#fld)" stroke="#d9b750" stroke-width=".6"/><path d="M1 14h10" stroke="#cda53e" stroke-width=".5"/></svg>
<div style="left:691.3px;top:384px;width:672.7px;height:17px;background:#f5f5f5"></div>
<svg style="left:693.8px;top:384px" width="14" height="15" viewBox="0 0 14 15"><path d="M11.200 5.600h.6c.6 0 1 .4 1 1v6.200c0 .5-.4.9-.9.9h-.7z" fill="#ecd064" stroke="#cfa843" stroke-width=".5"/><path d="M11.750 6.800v4.400" stroke="#fffbe0" stroke-width=".7"/><rect x="11.300" y="10.900" width="1.100" height="1.700" fill="#86aa6c"/><path d="M.4 2c0-.6.4-1 1-1h9.200c.6 0 1 .4 1 1v11.200c0 .6-.4 1-1 1H1.400c-.6 0-1-.4-1-1z" fill="url(#fld)" stroke="#d9b750" stroke-width=".6"/><path d="M1 14h10" stroke="#cda53e" stroke-width=".5"/></svg>
<svg style="left:693.8px;top:401px" width="14" height="15" viewBox="0 0 14 15"><path d="M11.200 5.600h.6c.6 0 1 .4 1 1v6.200c0 .5-.4.9-.9.9h-.7z" fill="#ecd064" stroke="#cfa843" stroke-width=".5"/><path d="M11.750 6.800v4.400" stroke="#fffbe0" stroke-width=".7"/><rect x="11.300" y="10.900" width="1.100" height="1.700" fill="#86aa6c"/><path d="M.4 2c0-.6.4-1 1-1h9.200c.6 0 1 .4 1 1v11.200c0 .6-.4 1-1 1H1.400c-.6 0-1-.4-1-1z" fill="url(#fld)" stroke="#d9b750" stroke-width=".6"/><path d="M1 14h10" stroke="#cda53e" stroke-width=".5"/></svg>
<div style="left:691.3px;top:418px;width:672.7px;height:17px;background:#f5f5f5"></div>
<svg style="left:693.8px;top:418px" width="14" height="15" viewBox="0 0 14 15"><path d="M11.200 5.600h.6c.6 0 1 .4 1 1v6.200c0 .5-.4.9-.9.9h-.7z" fill="#ecd064" stroke="#cfa843" stroke-width=".5"/><path d="M11.750 6.800v4.400" stroke="#fffbe0" stroke-width=".7"/><rect x="11.300" y="10.900" width="1.100" height="1.700" fill="#86aa6c"/><path d="M.4 2c0-.6.4-1 1-1h9.200c.6 0 1 .4 1 1v11.200c0 .6-.4 1-1 1H1.400c-.6 0-1-.4-1-1z" fill="url(#fld)" stroke="#d9b750" stroke-width=".6"/><path d="M1 14h10" stroke="#cda53e" stroke-width=".5"/></svg>
<svg style="left:693.8px;top:435px" width="14" height="15" viewBox="0 0 14 15"><path d="M11.200 5.600h.6c.6 0 1 .4 1 1v6.200c0 .5-.4.9-.9.9h-.7z" fill="#ecd064" stroke="#cfa843" stroke-width=".5"/><path d="M11.750 6.800v4.400" stroke="#fffbe0" stroke-width=".7"/><rect x="11.300" y="10.900" width="1.100" height="1.700" fill="#86aa6c"/><path d="M.4 2c0-.6.4-1 1-1h9.200c.6 0 1 .4 1 1v11.200c0 .6-.4 1-1 1H1.400c-.6 0-1-.4-1-1z" fill="url(#fld)" stroke="#d9b750" stroke-width=".6"/><path d="M1 14h10" stroke="#cda53e" stroke-width=".5"/></svg>
<div style="left:690.9px;top:197.4px;width:673.1px;height:16.2px;border:1px solid #3f74c8;box-sizing:border-box;box-shadow:0 0 0 .8px rgba(150,185,240,.6)"></div>
<div style="left:10px;top:916.8px;width:676px;height:1.2px;background:#b8b8b8"></div>
<div style="left:690.3px;top:916.8px;width:674.7px;height:1.2px;background:#b8b8b8"></div>
<div style="left:10px;top:896.5px;width:1px;height:21px;background:#c8c8c8"></div>
<div style="left:685px;top:896.5px;width:1px;height:21px;background:#c8c8c8"></div>
<div style="left:690.3px;top:896.5px;width:1px;height:21px;background:#c8c8c8"></div>
<div style="left:1364px;top:896.5px;width:1px;height:21px;background:#c8c8c8"></div>
<div style="left:462.9px;top:921px;width:901.6px;height:23.6px;background:#fff;border:1px solid #929292;border-top-color:#7c7c7c;border-radius:2.500px;box-sizing:border-box"></div>
<svg style="left:1348.7px;top:929.9px" width="11" height="7" viewBox="0 0 11 7"><path d="M1 1l4.500 4.500L10 1" fill="none" stroke="#444" stroke-width="1"/></svg>
<div style="left:200.9px;top:950px;width:1.2px;height:18px;background:#b4b4b4"></div>
<div style="left:393.9px;top:950px;width:1.2px;height:18px;background:#b4b4b4"></div>
<div style="left:586.6999999999999px;top:950px;width:1.2px;height:18px;background:#b4b4b4"></div>
<div style="left:780.1px;top:950px;width:1.2px;height:18px;background:#b4b4b4"></div>
<div style="left:972.9px;top:950px;width:1.2px;height:18px;background:#b4b4b4"></div>
<div style="left:1165.7px;top:950px;width:1.2px;height:18px;background:#b4b4b4"></div>
<span class="t r" style="left:43.6px;top:9.7px;font-size:15.5px;line-height:19px;transform:scaleX(0.9652);color:#151515">DTore - Total Commander (x64) 11.56 - V-Hнd Zrt</span>
<span class="t r" style="left:15.9px;top:42.0px;font-size:14.5px;line-height:17px;transform:scaleX(1.0243);color:#181818">Файлы</span>
<span class="t r" style="left:79.4px;top:42.0px;font-size:14.5px;line-height:17px;transform:scaleX(1.0176);color:#181818">Выделение</span>
<span class="t r" style="left:173.4px;top:42.0px;font-size:14.5px;line-height:17px;transform:scaleX(1.0497);color:#181818">Навигация</span>
<span class="t r" style="left:264.7px;top:42.0px;font-size:14.5px;line-height:17px;transform:scaleX(0.9674);color:#181818">Сеть</span>
<span class="t r" style="left:312.1px;top:42.0px;font-size:14.5px;line-height:17px;transform:scaleX(0.8580);color:#181818">FTP</span>
<span class="t r" style="left:351.4px;top:42.0px;font-size:14.5px;line-height:17px;transform:scaleX(0.9873);color:#181818">Вид</span>
<span class="t r" style="left:393.4px;top:42.0px;font-size:14.5px;line-height:17px;transform:scaleX(0.9998);color:#181818">Вкладки</span>
<span class="t r" style="left:465.2px;top:42.0px;font-size:14.5px;line-height:17px;transform:scaleX(1.0441);color:#181818">Конфигурация</span>
<span class="t r" style="left:583.0px;top:42.0px;font-size:14.5px;line-height:17px;transform:scaleX(1.0363);color:#181818">Инструменты</span>
<span class="t r" style="left:693.0px;top:42.0px;font-size:14.5px;line-height:17px;transform:scaleX(1.0340);color:#181818">Запуск</span>
<span class="t r" style="left:1142.4px;top:42.0px;font-size:14.5px;line-height:17px;transform:scaleX(1.0740);color:#181818">Папки</span>
<span class="t r" style="left:1202.0px;top:42.0px;font-size:14.5px;line-height:17px;transform:scaleX(1.0791);color:#181818">Компьютер</span>
<span class="t r" style="left:1298.8px;top:42.0px;font-size:14.5px;line-height:17px;transform:scaleX(1.0265);color:#181818">Справка</span>
<span class="t b" style="left:36.7px;top:103.6px;font-size:14.5px;line-height:17px;transform:scaleX(1.0000)">c</span>
<span class="t b" style="left:78.7px;top:103.6px;font-size:14.5px;line-height:17px;transform:scaleX(1.0000)">d</span>
<span class="t b" style="left:120.9px;top:103.6px;font-size:14.5px;line-height:17px;transform:scaleX(1.0000)">e</span>
<span class="t b" style="left:163.9px;top:102.9px;font-size:16.5px;line-height:20px;transform:scaleX(1.1000)">\</span>
<span class="t b" style="left:717.2px;top:103.6px;font-size:14.5px;line-height:17px;transform:scaleX(1.0000)">c</span>
<span class="t b" style="left:759.2px;top:103.6px;font-size:14.5px;line-height:17px;transform:scaleX(1.0000)">d</span>
<span class="t b" style="left:801.4px;top:103.6px;font-size:14.5px;line-height:17px;transform:scaleX(1.0000)">e</span>
<span class="t b" style="left:844.4px;top:102.9px;font-size:16.5px;line-height:20px;transform:scaleX(1.1000)">\</span>
<span class="t b" style="left:37.5px;top:135.7px;font-size:14.5px;line-height:17px;transform:scaleX(1.0000)">d</span>
<span class="t b" style="left:77.0px;top:135.4px;font-size:14.5px;line-height:17px;transform:scaleX(0.9818)">[Новый том]</span>
<span class="t b" style="left:174.4px;top:135.4px;font-size:14.5px;line-height:17px;transform:scaleX(1.0032)">124 192 212 Кб из 346 507 260 Кб свободно</span>
<span class="t b" style="left:644.9px;top:134.2px;font-size:16.5px;line-height:20px;transform:scaleX(1.2500)">\</span>
<span class="t b" style="left:667.8px;top:135.1px;font-size:14.5px;line-height:17px;transform:scaleX(1.1500)">..</span>
<span class="t b" style="left:717.9px;top:135.7px;font-size:14.5px;line-height:17px;transform:scaleX(1.0000)">c</span>
<span class="t b" style="left:757.0px;top:135.4px;font-size:14.5px;line-height:17px;transform:scaleX(1.0216)">[_нет_]</span>
<span class="t b" style="left:816.6px;top:135.4px;font-size:14.5px;line-height:17px;transform:scaleX(1.0055)">73 872 640 Кб из 152 063 736 Кб свободно</span>
<span class="t b" style="left:1323.9px;top:134.2px;font-size:16.5px;line-height:20px;transform:scaleX(1.2500)">\</span>
<span class="t b" style="left:1346.8px;top:135.1px;font-size:14.5px;line-height:17px;transform:scaleX(1.1500)">..</span>
<span class="t b" style="left:25.3px;top:158.2px;font-size:14.5px;line-height:17px;transform:scaleX(1.0354)">d:\*.*</span>
<span class="t b" style="left:704.9px;top:158.2px;font-size:14.5px;line-height:17px;transform:scaleX(1.0450)">c:\*.*</span>
<span class="t b" style="left:13.9px;top:178.5px;font-size:14.5px;line-height:17px;transform:scaleX(1.0031)">Имя</span>
<span class="t b" style="left:319.8px;top:178.5px;font-size:14.5px;line-height:17px;transform:scaleX(1.0622)">Тип</span>
<span class="t b" style="left:379.0px;top:178.5px;font-size:14.5px;line-height:17px;transform:scaleX(1.0782)">Размер</span>
<span class="t b" style="left:463.2px;top:178.5px;font-size:14.5px;line-height:17px;transform:scaleX(1.1024)">Дата</span>
<span class="t b" style="left:598.4px;top:178.5px;font-size:14.5px;line-height:17px;transform:scaleX(1.0229)">Атрибуты</span>
<span class="t b" style="left:30.7px;top:196.5px;font-size:14.5px;line-height:17px;transform:scaleX(1.0232)">СБОРНИК СОФТА</span>
<span class="t b" style="left:376.2px;top:196.5px;font-size:14.5px;line-height:17px;transform:scaleX(1.0518)">&lt;Папка&gt;</span>
<span class="t b" style="left:460.9px;top:196.5px;font-size:14.5px;line-height:17px;transform:scaleX(0.9992)">19.11.2024 11:55</span>
<span class="t r" style="left:595.9px;top:196.7px;font-size:14.5px;line-height:17px;transform:scaleX(1.3621)"><span style="letter-spacing:-1.200px">----</span></span>
<span class="t b" style="left:30.7px;top:213.5px;font-size:14.5px;line-height:17px;transform:scaleX(1.0531)">ТОРРЕНТЫ</span>
<span class="t b" style="left:376.2px;top:213.5px;font-size:14.5px;line-height:17px;transform:scaleX(1.0518)">&lt;Папка&gt;</span>
<span class="t b" style="left:460.9px;top:213.5px;font-size:14.5px;line-height:17px;transform:scaleX(0.9921)">19.02.2026 11:01</span>
<span class="t r" style="left:595.9px;top:213.7px;font-size:14.5px;line-height:17px;transform:scaleX(1.1916)"><span style="letter-spacing:-1.200px">-</span></span>
<span class="t b" style="left:601.9px;top:213.5px;font-size:14.5px;line-height:17px;transform:scaleX(1.0000)">a</span>
<span class="t r" style="left:610.0px;top:213.7px;font-size:14.5px;line-height:17px;transform:scaleX(1.3021)"><span style="letter-spacing:-1.200px">--</span></span>
<span class="t b" style="left:30.7px;top:230.5px;font-size:14.5px;line-height:17px;transform:scaleX(1.1275)">ТРЕКЕР</span>
<span class="t b" style="left:376.2px;top:230.5px;font-size:14.5px;line-height:17px;transform:scaleX(1.0518)">&lt;Папка&gt;</span>
<span class="t b" style="left:460.9px;top:230.5px;font-size:14.5px;line-height:17px;transform:scaleX(0.9852)">20.02.2026 20:30</span>
<span class="t r" style="left:595.9px;top:230.7px;font-size:14.5px;line-height:17px;transform:scaleX(1.1916)"><span style="letter-spacing:-1.200px">-</span></span>
<span class="t b" style="left:601.9px;top:230.5px;font-size:14.5px;line-height:17px;transform:scaleX(1.0000)">a</span>
<span class="t r" style="left:610.0px;top:230.7px;font-size:14.5px;line-height:17px;transform:scaleX(1.3021)"><span style="letter-spacing:-1.200px">--</span></span>
<span class="t b" style="left:694.2px;top:178.5px;font-size:14.5px;line-height:17px;transform:scaleX(1.0031)">Имя</span>
<span class="t b" style="left:1000.2px;top:178.5px;font-size:14.5px;line-height:17px;transform:scaleX(1.0622)">Тип</span>
<span class="t b" style="left:1058.7px;top:178.5px;font-size:14.5px;line-height:17px;transform:scaleX(1.0782)">Размер</span>
<span class="t b" style="left:1144.0px;top:178.5px;font-size:14.5px;line-height:17px;transform:scaleX(1.1024)">Дата</span>
<span class="t b" style="left:1278.6px;top:178.5px;font-size:14.5px;line-height:17px;transform:scaleX(1.0229)">Атрибуты</span>
<span class="t b" style="left:711.0px;top:196.5px;font-size:14.5px;line-height:17px;transform:scaleX(0.9785)">Activators</span>
<span class="t b" style="left:1055.9px;top:196.5px;font-size:14.5px;line-height:17px;transform:scaleX(1.0518)">&lt;Папка&gt;</span>
<span class="t b" style="left:1141.7px;top:196.5px;font-size:14.5px;line-height:17px;transform:scaleX(0.9852)">26.04.2023 21:46</span>
<span class="t r" style="left:1276.1px;top:196.7px;font-size:14.5px;line-height:17px;transform:scaleX(1.3621)"><span style="letter-spacing:-1.200px">----</span></span>
<span class="t b" style="left:711.0px;top:213.5px;font-size:14.5px;line-height:17px;transform:scaleX(1.0081)">Avatars</span>
<span class="t b" style="left:1055.9px;top:213.5px;font-size:14.5px;line-height:17px;transform:scaleX(1.0518)">&lt;Папка&gt;</span>
<span class="t b" style="left:1141.7px;top:213.5px;font-size:14.5px;line-height:17px;transform:scaleX(0.9852)">26.04.2023 21:46</span>
<span class="t r" style="left:1276.1px;top:213.7px;font-size:14.5px;line-height:17px;transform:scaleX(1.3621)"><span style="letter-spacing:-1.200px">----</span></span>
<span class="t b" style="left:711.0px;top:230.5px;font-size:14.5px;line-height:17px;transform:scaleX(0.9672)">Config</span>
<span class="t b" style="left:1055.9px;top:230.5px;font-size:14.5px;line-height:17px;transform:scaleX(1.0518)">&lt;Папка&gt;</span>
<span class="t b" style="left:1141.7px;top:230.5px;font-size:14.5px;line-height:17px;transform:scaleX(0.9852)">27.05.2023 23:02</span>
<span class="t r" style="left:1276.1px;top:230.7px;font-size:14.5px;line-height:17px;transform:scaleX(1.3621)"><span style="letter-spacing:-1.200px">----</span></span>
<span class="t b" style="left:711.0px;top:247.5px;font-size:14.5px;line-height:17px;transform:scaleX(1.0408)">DRIVERS</span>
<span class="t b" style="left:1055.9px;top:247.5px;font-size:14.5px;line-height:17px;transform:scaleX(1.0518)">&lt;Папка&gt;</span>
<span class="t b" style="left:1141.7px;top:247.5px;font-size:14.5px;line-height:17px;transform:scaleX(0.9852)">28.01.2026 12:16</span>
<span class="t r" style="left:1276.1px;top:247.7px;font-size:14.5px;line-height:17px;transform:scaleX(1.3621)"><span style="letter-spacing:-1.200px">----</span></span>
<span class="t b" style="left:711.0px;top:264.5px;font-size:14.5px;line-height:17px;transform:scaleX(1.0212)">Games</span>
<span class="t b" style="left:1055.9px;top:264.5px;font-size:14.5px;line-height:17px;transform:scaleX(1.0518)">&lt;Папка&gt;</span>
<span class="t b" style="left:1141.7px;top:264.5px;font-size:14.5px;line-height:17px;transform:scaleX(0.9992)">18.11.2024 11:16</span>
<span class="t r" style="left:1276.1px;top:264.7px;font-size:14.5px;line-height:17px;transform:scaleX(1.3621)"><span style="letter-spacing:-1.200px">----</span></span>
<span class="t b" style="left:711.0px;top:281.5px;font-size:14.5px;line-height:17px;transform:scaleX(0.9759)">inetpub</span>
<span class="t b" style="left:1055.9px;top:281.5px;font-size:14.5px;line-height:17px;transform:scaleX(1.0518)">&lt;Папка&gt;</span>
<span class="t b" style="left:1141.7px;top:281.5px;font-size:14.5px;line-height:17px;transform:scaleX(0.9852)">02.02.2026 12:00</span>
<span class="t r" style="left:1276.1px;top:281.7px;font-size:14.5px;line-height:17px;transform:scaleX(1.3621)"><span style="letter-spacing:-1.200px">----</span></span>
<span class="t b" style="left:711.0px;top:298.5px;font-size:14.5px;line-height:17px;transform:scaleX(1.0038)">MainSDK</span>
<span class="t b" style="left:1055.9px;top:298.5px;font-size:14.5px;line-height:17px;transform:scaleX(1.0518)">&lt;Папка&gt;</span>
<span class="t b" style="left:1141.7px;top:298.5px;font-size:14.5px;line-height:17px;transform:scaleX(0.9852)">29.04.2023 13:15</span>
<span class="t r" style="left:1276.1px;top:298.7px;font-size:14.5px;line-height:17px;transform:scaleX(1.3621)"><span style="letter-spacing:-1.200px">----</span></span>
<span class="t b" style="left:711.0px;top:315.5px;font-size:14.5px;line-height:17px;transform:scaleX(1.0473)">MSI</span>
<span class="t b" style="left:1055.9px;top:315.5px;font-size:14.5px;line-height:17px;transform:scaleX(1.0518)">&lt;Папка&gt;</span>
<span class="t b" style="left:1141.7px;top:315.5px;font-size:14.5px;line-height:17px;transform:scaleX(0.9921)">29.08.2023 11:25</span>
<span class="t r" style="left:1276.1px;top:315.7px;font-size:14.5px;line-height:17px;transform:scaleX(1.3621)"><span style="letter-spacing:-1.200px">----</span></span>
<span class="t b" style="left:711.0px;top:332.5px;font-size:14.5px;line-height:17px;transform:scaleX(0.9898)">PerfLogs</span>
<span class="t b" style="left:1055.9px;top:332.5px;font-size:14.5px;line-height:17px;transform:scaleX(1.0518)">&lt;Папка&gt;</span>
<span class="t b" style="left:1141.7px;top:332.5px;font-size:14.5px;line-height:17px;transform:scaleX(0.9852)">01.04.2024 10:26</span>
<span class="t r" style="left:1276.1px;top:332.7px;font-size:14.5px;line-height:17px;transform:scaleX(1.3621)"><span style="letter-spacing:-1.200px">----</span></span>
<span class="t b" style="left:711.0px;top:349.5px;font-size:14.5px;line-height:17px;transform:scaleX(1.0072)">Program Files</span>
<span class="t b" style="left:1055.9px;top:349.5px;font-size:14.5px;line-height:17px;transform:scaleX(1.0518)">&lt;Папка&gt;</span>
<span class="t b" style="left:1141.7px;top:349.5px;font-size:14.5px;line-height:17px;transform:scaleX(0.9852)">20.02.2026 18:29</span>
<span class="t b" style="left:1276.4px;top:349.5px;font-size:14.5px;line-height:17px;transform:scaleX(1.0000)">r</span>
<span class="t r" style="left:1281.1px;top:349.7px;font-size:14.5px;line-height:17px;transform:scaleX(1.3189)"><span style="letter-spacing:-1.200px">---</span></span>
<span class="t b" style="left:711.0px;top:366.5px;font-size:14.5px;line-height:17px;transform:scaleX(1.0024)">Program Files (x86)</span>
<span class="t b" style="left:1055.9px;top:366.5px;font-size:14.5px;line-height:17px;transform:scaleX(1.0518)">&lt;Папка&gt;</span>
<span class="t b" style="left:1141.7px;top:366.5px;font-size:14.5px;line-height:17px;transform:scaleX(0.9852)">20.02.2026 20:32</span>
<span class="t b" style="left:1276.4px;top:366.5px;font-size:14.5px;line-height:17px;transform:scaleX(1.0000)">r</span>
<span class="t r" style="left:1281.1px;top:366.7px;font-size:14.5px;line-height:17px;transform:scaleX(1.3189)"><span style="letter-spacing:-1.200px">---</span></span>
<span class="t b" style="left:711.0px;top:383.5px;font-size:14.5px;line-height:17px;transform:scaleX(0.9911)">Programs</span>
<span class="t b" style="left:1055.9px;top:383.5px;font-size:14.5px;line-height:17px;transform:scaleX(1.0518)">&lt;Папка&gt;</span>
<span class="t b" style="left:1141.7px;top:383.5px;font-size:14.5px;line-height:17px;transform:scaleX(0.9852)">17.02.2026 10:04</span>
<span class="t r" style="left:1276.1px;top:383.7px;font-size:14.5px;line-height:17px;transform:scaleX(1.3621)"><span style="letter-spacing:-1.200px">----</span></span>
<span class="t b" style="left:711.0px;top:400.5px;font-size:14.5px;line-height:17px;transform:scaleX(1.0715)">Temp</span>
<span class="t b" style="left:1055.9px;top:400.5px;font-size:14.5px;line-height:17px;transform:scaleX(1.0518)">&lt;Папка&gt;</span>
<span class="t b" style="left:1141.7px;top:400.5px;font-size:14.5px;line-height:17px;transform:scaleX(0.9921)">19.11.2024 10:35</span>
<span class="t r" style="left:1276.1px;top:400.7px;font-size:14.5px;line-height:17px;transform:scaleX(1.3621)"><span style="letter-spacing:-1.200px">----</span></span>
<span class="t b" style="left:711.0px;top:417.5px;font-size:14.5px;line-height:17px;transform:scaleX(1.0295)">Users</span>
<span class="t b" style="left:1055.9px;top:417.5px;font-size:14.5px;line-height:17px;transform:scaleX(1.0518)">&lt;Папка&gt;</span>
<span class="t b" style="left:1141.7px;top:417.5px;font-size:14.5px;line-height:17px;transform:scaleX(0.9852)">20.02.2026 09:52</span>
<span class="t b" style="left:1276.4px;top:417.5px;font-size:14.5px;line-height:17px;transform:scaleX(1.0000)">r</span>
<span class="t r" style="left:1281.1px;top:417.7px;font-size:14.5px;line-height:17px;transform:scaleX(1.3189)"><span style="letter-spacing:-1.200px">---</span></span>
<span class="t b" style="left:711.0px;top:434.5px;font-size:14.5px;line-height:17px;transform:scaleX(0.9793)">Windows</span>
<span class="t b" style="left:1055.9px;top:434.5px;font-size:14.5px;line-height:17px;transform:scaleX(1.0518)">&lt;Папка&gt;</span>
<span class="t b" style="left:1141.7px;top:434.5px;font-size:14.5px;line-height:17px;transform:scaleX(0.9921)">19.02.2026 11:49</span>
<span class="t r" style="left:1276.1px;top:434.7px;font-size:14.5px;line-height:17px;transform:scaleX(1.3621)"><span style="letter-spacing:-1.200px">----</span></span>
<span class="t b" style="left:13.2px;top:898.1px;font-size:14.5px;line-height:17px;transform:scaleX(1.0233)">0 Кб из 0 Кб, файлов: 0 из 0, папок: 0 из 3</span>
<span class="t b" style="left:693.4px;top:898.1px;font-size:14.5px;line-height:17px;transform:scaleX(1.0215)">0 Кб из 0 Кб, файлов: 0 из 0, папок: 0 из 15</span>
<span class="t b" style="left:434.7px;top:925.3px;font-size:14.5px;line-height:17px;transform:scaleX(1.0201)">c:\&gt;</span>
<span class="t b" style="left:57.6px;top:951.3px;font-size:14.5px;line-height:17px;transform:scaleX(1.0310)">F3 Просмотр</span>
<span class="t b" style="left:260.4px;top:951.3px;font-size:14.5px;line-height:17px;transform:scaleX(1.0464)">F4 Правка</span>
<span class="t b" style="left:431.4px;top:951.3px;font-size:14.5px;line-height:17px;transform:scaleX(1.0311)">F5 Копирование</span>
<span class="t b" style="left:621.9px;top:951.3px;font-size:14.5px;line-height:17px;transform:scaleX(1.0264)">F6 Перемещение</span>
<span class="t b" style="left:837.4px;top:951.3px;font-size:14.5px;line-height:17px;transform:scaleX(1.0606)">F7 Каталог</span>
<span class="t b" style="left:1023.4px;top:951.3px;font-size:14.5px;line-height:17px;transform:scaleX(1.0543)">F8 Удаление</span>
<span class="t b" style="left:1219.9px;top:951.3px;font-size:14.5px;line-height:17px;transform:scaleX(0.9590)">Alt+F4 Выход</span>
</div></body></html>
